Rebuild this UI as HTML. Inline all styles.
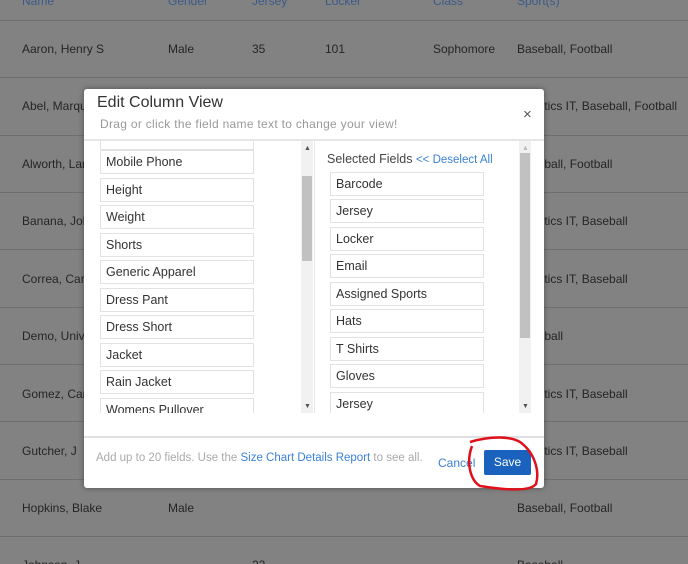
<!DOCTYPE html>
<html style="width:688px;height:564px;overflow:hidden"><head><style>
*{box-sizing:border-box;margin:0;padding:0}
body{width:688px;height:564px;overflow:hidden;background:#828282;font-family:"Liberation Sans",sans-serif;position:relative}
.row{position:absolute;left:0;width:688px;border-top:1px solid #6e6e6e;height:57px}
.t{position:absolute;font-size:12px;color:#252525;white-space:nowrap}
.h{color:#3a5a8a}
.modal{position:absolute;left:84px;top:89px;width:460px;height:399px;background:#fff;border-radius:3px;box-shadow:0 0 6px rgba(0,0,0,.4)}
.box{position:absolute;height:24px;border:1px solid #e2e2e2;font-size:12.5px;color:#333;padding:4px 5px;line-height:14px;width:154px;background:#fff}
</style></head><body>
<div class="row" style="top:20px"></div>
<div class="t h" style="left:22px;top:-6px">Name</div><div class="t h" style="left:168px;top:-6px">Gender</div><div class="t h" style="left:252px;top:-6px">Jersey</div><div class="t h" style="left:325px;top:-6px">Locker</div><div class="t h" style="left:433px;top:-6px">Class</div><div class="t h" style="left:517px;top:-6px">Sport(s)</div>
<div class="row" style="top:77px"></div><div class="row" style="top:135px"></div><div class="row" style="top:192px"></div><div class="row" style="top:249px"></div><div class="row" style="top:307px"></div><div class="row" style="top:364px"></div><div class="row" style="top:421px"></div><div class="row" style="top:479px"></div><div class="row" style="top:536px;height:28px"></div>
<div class="t" style="left:22px;top:42px">Aaron, Henry S</div><div class="t" style="left:168px;top:42px">Male</div><div class="t" style="left:252px;top:42px">35</div><div class="t" style="left:325px;top:42px">101</div><div class="t" style="left:433px;top:42px">Sophomore</div><div class="t" style="left:517px;top:42px">Baseball, Football</div>
<div class="t" style="left:22px;top:99px">Abel, Marquez</div><div class="t" style="left:517px;top:99px">Athletics IT, Baseball, Football</div>
<div class="t" style="left:22px;top:157px">Alworth, Lance</div><div class="t" style="left:517px;top:157px">Baseball, Football</div>
<div class="t" style="left:22px;top:214px">Banana, John</div><div class="t" style="left:517px;top:214px">Athletics IT, Baseball</div>
<div class="t" style="left:22px;top:272px">Correa, Carlos</div><div class="t" style="left:517px;top:272px">Athletics IT, Baseball</div>
<div class="t" style="left:22px;top:329px">Demo, University</div><div class="t" style="left:517px;top:329px">Baseball</div>
<div class="t" style="left:22px;top:387px">Gomez, Carlos</div><div class="t" style="left:517px;top:387px">Athletics IT, Baseball</div>
<div class="t" style="left:22px;top:444px">Gutcher, J</div><div class="t" style="left:517px;top:444px">Athletics IT, Baseball</div>
<div class="t" style="left:22px;top:501px">Hopkins, Blake</div><div class="t" style="left:168px;top:501px">Male</div><div class="t" style="left:517px;top:501px">Baseball, Football</div>
<div class="t" style="left:22px;top:558px">Johnson, J</div><div class="t" style="left:252px;top:558px">22</div><div class="t" style="left:517px;top:558px">Baseball</div>

<div class="modal">
<div style="position:absolute;left:13px;top:5px;font-size:16px;color:#333">Edit Column View</div>
<div style="position:absolute;left:16px;top:28px;font-size:12px;color:#999;letter-spacing:.3px">Drag or click the field name text to change your view!</div>
<div style="position:absolute;left:439px;top:17px;font-size:15px;color:#555">×</div>
<div style="position:absolute;left:0;top:50px;width:460px;border-top:2px solid #e6e6e6"></div>
<div style="position:absolute;left:0;top:52px;width:460px;height:272px;overflow:hidden">
 <div class="box" style="left:16px;top:-15px"></div>
 <div class="box" style="left:16px;top:9px">Mobile Phone</div>
 <div class="box" style="left:16px;top:37px">Height</div>
 <div class="box" style="left:16px;top:64px">Weight</div>
 <div class="box" style="left:16px;top:92px">Shorts</div>
 <div class="box" style="left:16px;top:119px">Generic Apparel</div>
 <div class="box" style="left:16px;top:147px">Dress Pant</div>
 <div class="box" style="left:16px;top:174px">Dress Short</div>
 <div class="box" style="left:16px;top:202px">Jacket</div>
 <div class="box" style="left:16px;top:229px">Rain Jacket</div>
 <div class="box" style="left:16px;top:257px">Womens Pullover</div>
 <div style="position:absolute;left:217px;top:0;width:12px;height:272px;background:#f1f1f1"></div>
 <div style="position:absolute;left:218px;top:35px;width:10px;height:85px;background:#c1c1c1"></div>
 <div style="position:absolute;left:220px;top:4px;font-size:7px;color:#555">▲</div>
 <div style="position:absolute;left:220px;top:262px;font-size:7px;color:#555">▼</div>
 <div style="position:absolute;left:230px;top:0;height:272px;border-left:1px solid #e6e6e6"></div>
 <div style="position:absolute;left:243px;top:11px;font-size:12.5px;color:#444">Selected Fields <span style="color:#3b82d4;font-size:11.5px">&lt;&lt; Deselect All</span></div>
 <div class="box" style="left:246px;top:31px">Barcode</div>
 <div class="box" style="left:246px;top:58px">Jersey</div>
 <div class="box" style="left:246px;top:86px">Locker</div>
 <div class="box" style="left:246px;top:113px">Email</div>
 <div class="box" style="left:246px;top:141px">Assigned Sports</div>
 <div class="box" style="left:246px;top:168px">Hats</div>
 <div class="box" style="left:246px;top:196px">T Shirts</div>
 <div class="box" style="left:246px;top:223px">Gloves</div>
 <div class="box" style="left:246px;top:251px">Jersey</div>
 <div style="position:absolute;left:435px;top:0;width:12px;height:272px;background:#f1f1f1"></div>
 <div style="position:absolute;left:436px;top:12px;width:10px;height:185px;background:#c1c1c1"></div>
 <div style="position:absolute;left:438px;top:4px;font-size:7px;color:#bbb">▲</div>
 <div style="position:absolute;left:438px;top:262px;font-size:7px;color:#555">▼</div>
</div>
<div style="position:absolute;left:0;top:347px;width:460px;border-top:2px solid #e0e0e0"></div>
<div style="position:absolute;left:12px;top:363px;font-size:11.5px;color:#aaa">Add up to 20 fields. Use the <span style="color:#3b82d4">Size Chart Details Report</span> to see all.</div>
<div style="position:absolute;left:354px;top:367px;font-size:12px;color:#3b82d4">Cancel</div>
<div style="position:absolute;left:400px;top:361px;width:47px;height:25px;background:#1a62be;border-radius:2px;color:#fff;font-size:12px;text-align:center;line-height:25px">Save</div>
</div>
<svg style="position:absolute;left:0;top:0" width="688" height="564"><path d="M470 442 C490 436 510 436 520 442 C534 452 540 470 536 484 C530 492 505 490 480 486 C470 480 466 462 472 446" fill="none" stroke="#e0101a" stroke-width="2.5"/></svg>
</body></html>
